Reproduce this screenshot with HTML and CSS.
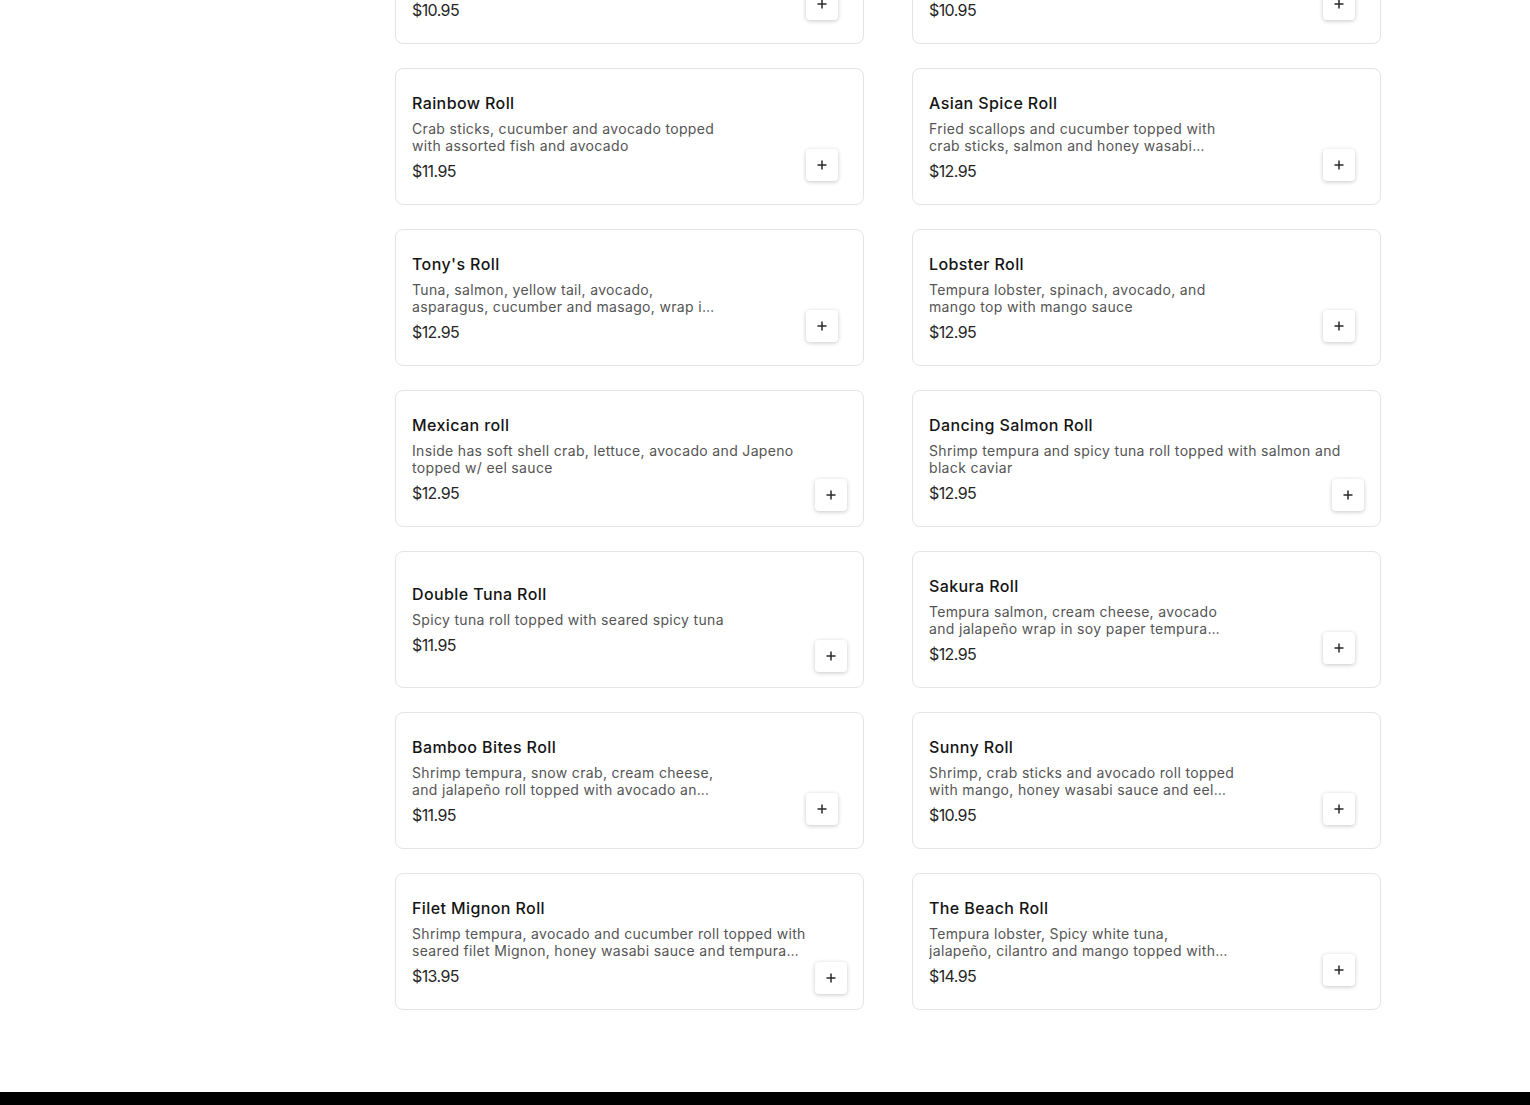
FILE: index.html
```html
<!DOCTYPE html>
<html lang="en">
<head>
<meta charset="utf-8">
<title>Menu</title>
<link rel="stylesheet" href="styles.css">
</head>
<body>
<div class="page">
  <aside class="sidebar"></aside>
  <main class="menu">
    <div class="grid">
      <div class="card has-img">
        <div class="info"><h3 class="name">California Roll</h3><p class="desc">Crab sticks, avocado and cucumber roll topped with sesame seeds and masago</p><div class="price">$10.95</div></div>
        <button class="add"><svg viewBox="0 0 10 10"><path d="M5 0.5v9M0.5 5h9"/></svg></button>
      </div>
      <div class="card has-img">
        <div class="info"><h3 class="name">Spicy Tuna Roll</h3><p class="desc">Spicy tuna, cucumber and avocado roll topped with crunchy tempura flakes</p><div class="price">$10.95</div></div>
        <button class="add"><svg viewBox="0 0 10 10"><path d="M5 0.5v9M0.5 5h9"/></svg></button>
      </div>

      <div class="card has-img">
        <div class="info"><h3 class="name">Rainbow Roll</h3><p class="desc">Crab sticks, cucumber and avocado topped with assorted fish and avocado</p><div class="price">$11.95</div></div>
        <button class="add"><svg viewBox="0 0 10 10"><path d="M5 0.5v9M0.5 5h9"/></svg></button>
      </div>
      <div class="card has-img">
        <div class="info"><h3 class="name">Asian Spice Roll</h3><p class="desc">Fried scallops and cucumber topped with crab sticks, salmon and honey wasabi sauce and eel sauce</p><div class="price">$12.95</div></div>
        <button class="add"><svg viewBox="0 0 10 10"><path d="M5 0.5v9M0.5 5h9"/></svg></button>
      </div>

      <div class="card has-img">
        <div class="info"><h3 class="name">Tony's Roll</h3><p class="desc">Tuna, salmon, yellow tail, avocado, asparagus, cucumber and masago, wrap in soy paper</p><div class="price">$12.95</div></div>
        <button class="add"><svg viewBox="0 0 10 10"><path d="M5 0.5v9M0.5 5h9"/></svg></button>
      </div>
      <div class="card has-img">
        <div class="info"><h3 class="name">Lobster Roll</h3><p class="desc">Tempura lobster, spinach, avocado, and mango top with mango sauce</p><div class="price">$12.95</div></div>
        <button class="add"><svg viewBox="0 0 10 10"><path d="M5 0.5v9M0.5 5h9"/></svg></button>
      </div>

      <div class="card no-img">
        <div class="info"><h3 class="name">Mexican roll</h3><p class="desc">Inside has soft shell crab, lettuce, avocado and Japeno topped w/ eel sauce</p><div class="price">$12.95</div></div>
        <button class="add"><svg viewBox="0 0 10 10"><path d="M5 0.5v9M0.5 5h9"/></svg></button>
      </div>
      <div class="card no-img">
        <div class="info"><h3 class="name">Dancing Salmon Roll</h3><p class="desc">Shrimp tempura and spicy tuna roll topped with salmon and black caviar</p><div class="price">$12.95</div></div>
        <button class="add"><svg viewBox="0 0 10 10"><path d="M5 0.5v9M0.5 5h9"/></svg></button>
      </div>

      <div class="card no-img">
        <div class="info"><h3 class="name">Double Tuna Roll</h3><p class="desc">Spicy tuna roll topped with seared spicy tuna</p><div class="price">$11.95</div></div>
        <button class="add"><svg viewBox="0 0 10 10"><path d="M5 0.5v9M0.5 5h9"/></svg></button>
      </div>
      <div class="card has-img">
        <div class="info"><h3 class="name">Sakura Roll</h3><p class="desc">Tempura salmon, cream cheese, avocado and jalapeño wrap in soy paper tempura style with eel sauce</p><div class="price">$12.95</div></div>
        <button class="add"><svg viewBox="0 0 10 10"><path d="M5 0.5v9M0.5 5h9"/></svg></button>
      </div>

      <div class="card has-img">
        <div class="info"><h3 class="name">Bamboo Bites Roll</h3><p class="desc">Shrimp tempura, snow crab, cream cheese, and jalapeño roll topped with avocado and eel sauce</p><div class="price">$11.95</div></div>
        <button class="add"><svg viewBox="0 0 10 10"><path d="M5 0.5v9M0.5 5h9"/></svg></button>
      </div>
      <div class="card has-img">
        <div class="info"><h3 class="name">Sunny Roll</h3><p class="desc">Shrimp, crab sticks and avocado roll topped with mango, honey wasabi sauce and eel sauce</p><div class="price">$10.95</div></div>
        <button class="add"><svg viewBox="0 0 10 10"><path d="M5 0.5v9M0.5 5h9"/></svg></button>
      </div>

      <div class="card no-img">
        <div class="info"><h3 class="name">Filet Mignon Roll</h3><p class="desc">Shrimp tempura, avocado and cucumber roll topped with seared filet Mignon, honey wasabi sauce and tempura flakes</p><div class="price">$13.95</div></div>
        <button class="add"><svg viewBox="0 0 10 10"><path d="M5 0.5v9M0.5 5h9"/></svg></button>
      </div>
      <div class="card has-img">
        <div class="info"><h3 class="name">The Beach Roll</h3><p class="desc">Tempura lobster, Spicy white tuna, jalapeño, cilantro and mango topped with spicy mayo and eel sauce</p><div class="price">$14.95</div></div>
        <button class="add"><svg viewBox="0 0 10 10"><path d="M5 0.5v9M0.5 5h9"/></svg></button>
      </div>
    </div>
  </main>
</div>
<footer class="footer"></footer>
</body>
</html>
```

FILE: styles.css
```css
* { box-sizing: border-box; }
html, body { margin: 0; padding: 0; background: #fff; }
body {
  font-family: Inter, "Open Sans", "DejaVu Sans", sans-serif;
  color: #1a1a1a;
}
.page { display: flex; }
.sidebar { width: 395px; flex-shrink: 0; }
.menu { width: 986px; flex-shrink: 0; }
.grid {
  display: grid;
  grid-template-columns: 469px 469px;
  column-gap: 48px;
  row-gap: 24px;
  margin-top: -93px;
  padding-bottom: 82px;
}
.card {
  position: relative;
  height: 137px;
  border: 1px solid #e4e4e4;
  border-radius: 8px;
  background: #fff;
  padding: 0 16px;
  display: flex;
  align-items: center;
}
.info { width: 420px; }
.has-img .info { width: 305.5px; }
.name {
  margin: 0 0 7px;
  font-size: 16px;
  line-height: 20px;
  font-weight: 500;
  letter-spacing: 0.4px;
  color: #141414;
}
.desc {
  margin: 0 0 7px;
  font-size: 14px;
  line-height: 17px;
  letter-spacing: 0.33px;
  color: #555;
  display: -webkit-box;
  -webkit-line-clamp: 2;
  -webkit-box-orient: vertical;
  overflow: hidden;
}
.price {
  font-size: 16px;
  line-height: 20px;
  letter-spacing: -0.6px;
  color: #262626;
}
.add {
  position: absolute;
  width: 32px;
  height: 32px;
  padding: 0;
  border: none;
  border-radius: 4px;
  background: #fff;
  box-shadow: 0 1px 4px rgba(0, 0, 0, 0.22);
  display: flex;
  align-items: center;
  justify-content: center;
  cursor: pointer;
}
.has-img .add { right: 25px; bottom: 23px; }
.no-img .add { right: 16px; bottom: 15px; }
.add svg {
  width: 10px;
  height: 10px;
  fill: none;
  stroke: #2a2a2a;
  stroke-width: 1.5;
}
.footer {
  height: 300px;
  background: #000;
}
```
